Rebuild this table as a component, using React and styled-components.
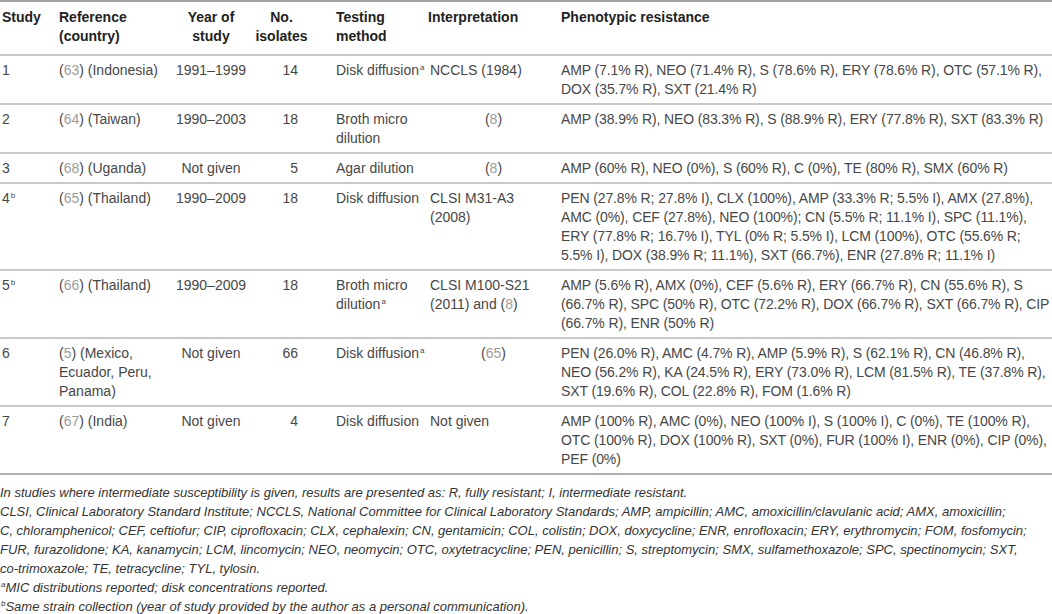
import React from 'react';
import styled, { createGlobalStyle } from 'styled-components';

const GlobalStyle = createGlobalStyle`
  html, body {
    margin: 0;
    padding: 0;
    background: #fff;
  }
  body {
    font-family: "Liberation Sans", Arial, sans-serif;
    color: #474747;
  }
`;

const Page = styled.div`
  width: 1052px;
  display: flex;
  flex-direction: column;
`;

const Table = styled.table`
  width: 100%;
  table-layout: fixed;
  border-collapse: collapse;
  font-size: 14px;
  line-height: 19px;
  border-top: 2px solid #a3a3a3;
  border-bottom: 2px solid #b0b0b0;
`;

const HeadCell = styled.th`
  font-weight: 700;
  color: #222;
  text-align: ${(p) => p.$align || 'left'};
  vertical-align: top;
  padding: 6px ${(p) => p.$pr || 0}px 8px ${(p) => p.$pl || 0}px;
  border-bottom: 2px solid #c6c6c6;
`;

const Row = styled.tr`
  border-bottom: 2px solid #c9c9c9;

  &:last-child {
    border-bottom: none;
  }
`;

const Cell = styled.td`
  text-align: ${(p) => p.$align || 'left'};
  vertical-align: top;
  white-space: ${(p) => (p.$nowrap ? 'pre' : 'pre-line')};
  letter-spacing: ${(p) => (p.$nowrap ? '-0.12px' : 'normal')};
  padding: 5px ${(p) => p.$pr || 0}px 4px ${(p) => p.$pl || 0}px;
`;

const RefNum = styled.span`
  color: #9c9c9c;
`;

const Sup = styled.sup`
  font-size: 8px;
  line-height: 0;
  vertical-align: 5px;
  margin-left: 1px;
`;

const Notes = styled.div`
  margin-top: 8px;
  font-size: 13px;
  line-height: 19px;
  font-style: italic;
  color: #333;
  white-space: pre-line;
`;

const Note = styled.p`
  margin: 0;
`;

const Ref = ({ n }) => (
  <>
    (<RefNum>{n}</RefNum>)
  </>
);

const rows = [
  {
    study: '1',
    ref: '63',
    country: ' (Indonesia)',
    year: '1991–1999',
    n: '14',
    method: 'Disk diffusion',
    methodSup: 'a',
    interp: 'NCCLS (1984)',
    pheno: 'AMP (7.1% R), NEO (71.4% R), S (78.6% R), ERY (78.6% R), OTC (57.1% R),\nDOX (35.7% R), SXT (21.4% R)',
  },
  {
    study: '2',
    ref: '64',
    country: ' (Taiwan)',
    year: '1990–2003',
    n: '18',
    method: 'Broth micro\ndilution',
    interpRef: '8',
    pheno: 'AMP (38.9% R), NEO (83.3% R), S (88.9% R), ERY (77.8% R), SXT (83.3% R)',
  },
  {
    study: '3',
    ref: '68',
    country: ' (Uganda)',
    year: 'Not given',
    n: '5',
    method: 'Agar dilution',
    interpRef: '8',
    pheno: 'AMP (60% R), NEO (0%), S (60% R), C (0%), TE (80% R), SMX (60% R)',
  },
  {
    study: '4',
    sup: 'b',
    ref: '65',
    country: ' (Thailand)',
    year: '1990–2009',
    n: '18',
    method: 'Disk diffusion',
    interp: 'CLSI M31-A3\n(2008)',
    pheno:
      'PEN (27.8% R; 27.8% I), CLX (100%), AMP (33.3% R; 5.5% I), AMX (27.8%),\nAMC (0%), CEF (27.8%), NEO (100%); CN (5.5% R; 11.1% I), SPC (11.1%),\nERY (77.8% R; 16.7% I), TYL (0% R; 5.5% I), LCM (100%), OTC (55.6% R;\n5.5% I), DOX (38.9% R; 11.1%), SXT (66.7%), ENR (27.8% R; 11.1% I)',
  },
  {
    study: '5',
    sup: 'b',
    ref: '66',
    country: ' (Thailand)',
    year: '1990–2009',
    n: '18',
    method: 'Broth micro\ndilution',
    methodSup: 'a',
    interp: (
      <>
        {'CLSI M100-S21\n(2011) and '}
        <Ref n="8" />
      </>
    ),
    pheno:
      'AMP (5.6% R), AMX (0%), CEF (5.6% R), ERY (66.7% R), CN (55.6% R), S\n(66.7% R), SPC (50% R), OTC (72.2% R), DOX (66.7% R), SXT (66.7% R), CIP\n(66.7% R), ENR (50% R)',
  },
  {
    study: '6',
    ref: '5',
    country: ' (Mexico,\nEcuador, Peru,\nPanama)',
    year: 'Not given',
    n: '66',
    method: 'Disk diffusion',
    methodSup: 'a',
    interpRef: '65',
    pheno:
      'PEN (26.0% R), AMC (4.7% R), AMP (5.9% R), S (62.1% R), CN (46.8% R),\nNEO (56.2% R), KA (24.5% R), ERY (73.0% R), LCM (81.5% R), TE (37.8% R),\nSXT (19.6% R), COL (22.8% R), FOM (1.6% R)',
  },
  {
    study: '7',
    ref: '67',
    country: ' (India)',
    year: 'Not given',
    n: '4',
    method: 'Disk diffusion',
    interp: 'Not given',
    pheno:
      'AMP (100% R), AMC (0%), NEO (100% I), S (100% I), C (0%), TE (100% R),\nOTC (100% R), DOX (100% R), SXT (0%), FUR (100% I), ENR (0%), CIP (0%),\nPEF (0%)',
  },
];

const App = () => {
  return (
    <Page>
      <GlobalStyle />
      <Table>
        <colgroup>
          <col style={{ width: 59 }} />
          <col style={{ width: 112 }} />
          <col style={{ width: 80 }} />
          <col style={{ width: 83 }} />
          <col style={{ width: 92 }} />
          <col style={{ width: 133 }} />
          <col />
        </colgroup>
        <thead>
          <tr>
            <HeadCell $pl={2}>Study</HeadCell>
            <HeadCell>
              Reference
              <br />
              (country)
            </HeadCell>
            <HeadCell $align="center">
              Year of
              <br />
              study
            </HeadCell>
            <HeadCell $align="center" $pr={22}>
              No.
              <br />
              isolates
            </HeadCell>
            <HeadCell $pl={2}>
              Testing
              <br />
              method
            </HeadCell>
            <HeadCell $pl={2}>Interpretation</HeadCell>
            <HeadCell $pl={2}>Phenotypic resistance</HeadCell>
          </tr>
        </thead>
        <tbody>
          {rows.map((r) => (
            <Row key={r.study}>
              <Cell $pl={2}>
                {r.study}
                {r.sup && <Sup>{r.sup}</Sup>}
              </Cell>
              <Cell>
                <Ref n={r.ref} />
                {r.country}
              </Cell>
              <Cell $align="center">{r.year}</Cell>
              <Cell $align="right" $pr={36}>
                {r.n}
              </Cell>
              <Cell $pl={2}>
                {r.method}
                {r.methodSup && <Sup>{r.methodSup}</Sup>}
              </Cell>
              {r.interpRef ? (
                <Cell $align="center" $pl={2}>
                  <Ref n={r.interpRef} />
                </Cell>
              ) : (
                <Cell $pl={4}>{r.interp}</Cell>
              )}
              <Cell $pl={2} $nowrap>
                {r.pheno}
              </Cell>
            </Row>
          ))}
        </tbody>
      </Table>
      <Notes>
        <Note>
          In studies where intermediate susceptibility is given, results are presented as: R, fully resistant; I,
          intermediate resistant.
        </Note>
        <Note>
          {'CLSI, Clinical Laboratory Standard Institute; NCCLS, National Committee for Clinical Laboratory Standards; AMP, ampicillin; AMC, amoxicillin/clavulanic acid; AMX, amoxicillin;\nC, chloramphenicol; CEF, ceftiofur; CIP, ciprofloxacin; CLX, cephalexin; CN, gentamicin; COL, colistin; DOX, doxycycline; ENR, enrofloxacin; ERY, erythromycin; FOM, fosfomycin;\nFUR, furazolidone; KA, kanamycin; LCM, lincomycin; NEO, neomycin; OTC, oxytetracycline; PEN, penicillin; S, streptomycin; SMX, sulfamethoxazole; SPC, spectinomycin; SXT,\nco-trimoxazole; TE, tetracycline; TYL, tylosin.'}
        </Note>
        <Note>
          <Sup>a</Sup>MIC distributions reported; disk concentrations reported.
        </Note>
        <Note>
          <Sup>b</Sup>Same strain collection (year of study provided by the author as a personal communication).
        </Note>
      </Notes>
    </Page>
  );
};

export default App;
